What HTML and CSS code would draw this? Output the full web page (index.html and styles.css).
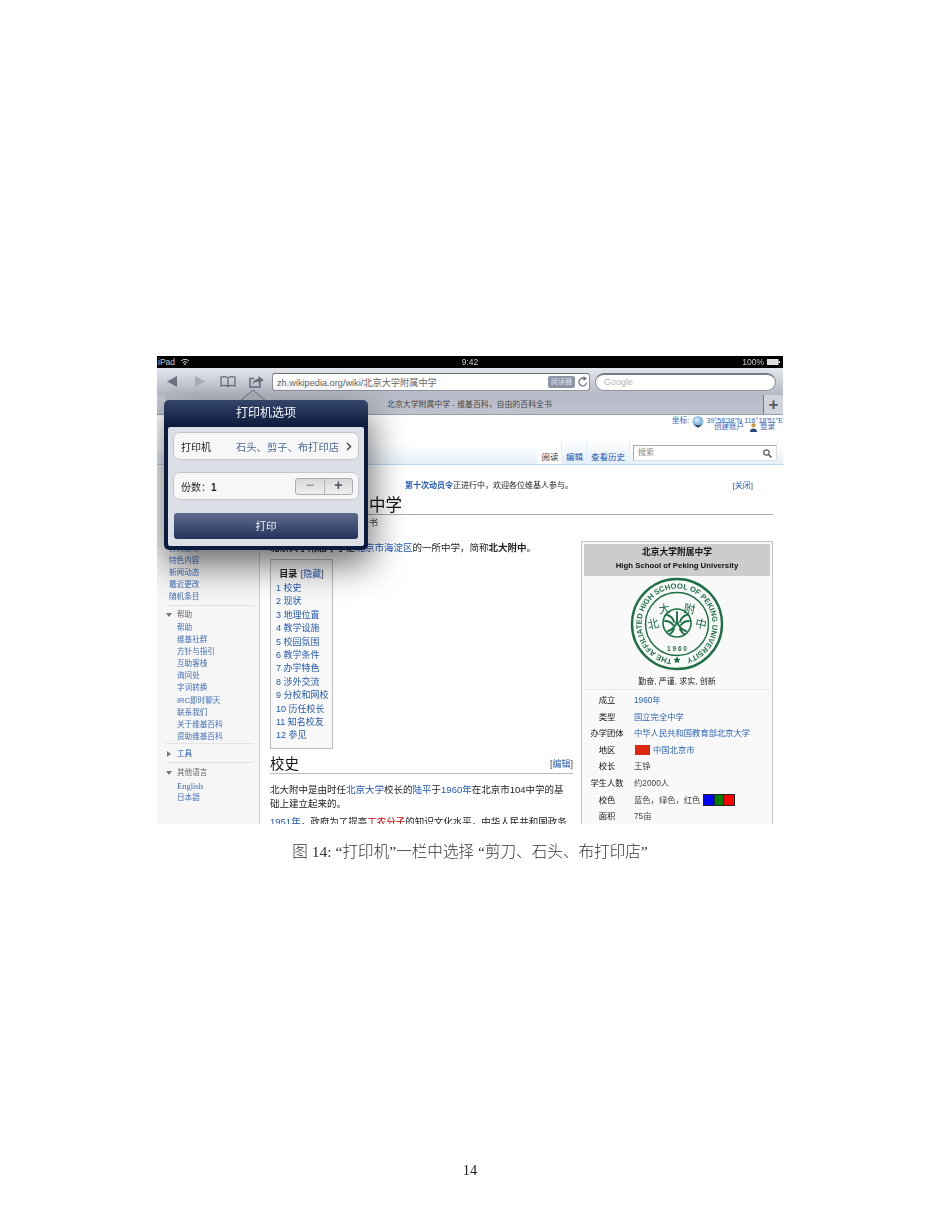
FILE: index.html
```html
<!DOCTYPE html>
<html lang="zh-CN">

<head>
    <meta charset="UTF-8">
    <title>图 14</title>
    <link rel="stylesheet" href="styles.css">
</head>

<body>
    <div class="page">
        <div class="ipad">
            <div class="status">
                <div class="status-left">
                    <span>iPad</span>
                    <svg class="wifi" viewBox="0 0 12 9"><path d="M1 3.500a7 7 0 0 1 10 0M3 5.500a4.200 4.200 0 0 1 6 0" fill="none" stroke="#ccc" stroke-width="1.200"/><path d="M6 8.500 4.400 6.800a2.300 2.300 0 0 1 3.200 0z" fill="#ccc"/></svg>
                </div>
                <span class="status-time">9:42</span>
                <div class="status-right">
                    <span>100%</span>
                    <svg class="battery" viewBox="0 0 13 6"><rect x=".5" y=".5" width="10.500" height="5" fill="#ddd" stroke="#ddd"/><rect x="11.500" y="2" width="1.500" height="2" fill="#ddd"/></svg>
                </div>
            </div>

            <div class="toolbar">
                <svg class="tool-back" viewBox="0 0 10 11"><path d="M0 5.500 10 0v11z" fill="#6b7280"/></svg>
                <svg class="tool-forward" viewBox="0 0 10 11"><path d="M10 5.500 0 0v11z" fill="#a9adba"/></svg>
                <svg class="tool-book" viewBox="0 0 16 11"><path d="M8 2C6.500.8 3 .6 1 1.200v8.600c2-.6 5.500-.4 7 .8 1.500-1.200 5-1.400 7-.8V1.200C13 .6 9.500.8 8 2zm0 0v8.600" fill="none" stroke="#666c7b" stroke-width="1.300"/></svg>
                <svg class="tool-share" viewBox="0 0 15 13"><path d="M5 3.500H1v8.500h10V8" fill="none" stroke="#666c7b" stroke-width="1.500"/><path d="M3.500 9.500c.3-3.500 3-5.500 6-5.500V1l5 4-5 4V6.500c-2.500 0-4.500 1-6 3z" fill="#666c7b"/></svg>
                <div class="url-field">
                    <span class="url-text">zh.wikipedia.org/wiki/北京大学附属中学</span>
                    <span class="reader">阅读器</span>
                    <svg class="reload" viewBox="0 0 10 11"><path d="M8.500 6.500A3.800 3.800 0 1 1 6.500 2.600" fill="none" stroke="#666c78" stroke-width="1.200"/><path d="M5.500 0 9 2.700 5.500 5z" fill="#666c78"/></svg>
                </div>
                <div class="search-field">Google</div>
            </div>

            <div class="tabbar">
                <div class="tab-stub"></div>
                <div class="tab-title">北京大学附属中学 - 维基百科，自由的百科全书</div>
                <div class="tab-plus">+</div>
            </div>

            <div class="wiki-head">
                <div class="user-links">
                    <div class="coords">
                        <span>坐标:</span>
                        <svg class="globe" viewBox="0 0 12 12"><circle cx="6" cy="5.500" r="5.500" fill="#8fc0e2"/><circle cx="5" cy="4" r="2.500" fill="#c9e2f3"/><path d="M1.500 8c2 1.500 7 1.500 9 0L6 12z" fill="#2f3d4d"/></svg>
                        <span class="coord-value">39°58'38"N 116°18'51"E</span>
                    </div>
                    <div class="login">
                        <span>创建账户</span>
                        <svg class="person" viewBox="0 0 8 10"><circle cx="4" cy="2.500" r="2.300" fill="#d9922f"/><path d="M0 10c0-5 8-5 8 0z" fill="#27477f"/></svg>
                        <span>登录</span>
                    </div>
                </div>
                <div class="tabs-row">
                    <span class="wtab wtab-active">阅读</span>
                    <span class="wtab">编辑</span>
                    <span class="wtab">查看历史</span>
                    <div class="wsearch">
                        <span>搜索</span>
                        <svg class="magnifier" viewBox="0 0 9 9"><circle cx="3.500" cy="3.500" r="2.700" fill="none" stroke="#555" stroke-width="1.200"/><path d="M5.500 5.500 8.500 8.500" stroke="#555" stroke-width="1.500"/></svg>
                    </div>
                </div>
            </div>

            <div class="wiki-body">
                <div class="sidebar">
                    <ul class="nav-list nav-first">
                        <li>分类索引</li>
                        <li>特色内容</li>
                        <li>新闻动态</li>
                        <li>最近更改</li>
                        <li>随机条目</li>
                    </ul>
                    <div class="nav-head"><i class="tri-down"></i>帮助</div>
                    <ul class="nav-list">
                        <li>帮助</li>
                        <li>维基社群</li>
                        <li>方针与指引</li>
                        <li>互助客栈</li>
                        <li>询问处</li>
                        <li>字词转换</li>
                        <li>IRC即时聊天</li>
                        <li>联系我们</li>
                        <li>关于维基百科</li>
                        <li>资助维基百科</li>
                    </ul>
                    <div class="nav-head nav-sep nav-tools"><i class="tri-right"></i><a>工具</a></div>
                    <div class="nav-head nav-sep"><i class="tri-down"></i>其他语言</div>
                    <ul class="nav-list">
                        <li class="serif">English</li>
                        <li>日本語</li>
                    </ul>
                </div>

                <div class="article">
                    <div class="notice">
                        <span><a>第十次动员令</a>正进行中，欢迎各位维基人参与。</span>
                        <a class="notice-close">[关闭]</a>
                    </div>
                    <h1 class="title">北京大学附属中学</h1>
                    <div class="subtitle">维基百科，自由的百科全书</div>
                    <div class="columns">
                        <div class="main-col">
                            <p class="intro"><b>北京大学附属中学</b>是<a>北京市海淀区</a>的一所中学，简称<b>北大附中</b>。</p>
                            <div class="toc">
                                <div class="toc-title"><b>目录</b> <span>[<a>隐藏</a>]</span></div>
                                <ol class="toc-list">
                                    <li>1 校史</li>
                                    <li>2 现状</li>
                                    <li>3 地理位置</li>
                                    <li>4 教学设施</li>
                                    <li>5 校园氛围</li>
                                    <li>6 教学条件</li>
                                    <li>7 办学特色</li>
                                    <li>8 涉外交流</li>
                                    <li>9 分校和网校</li>
                                    <li>10 历任校长</li>
                                    <li>11 知名校友</li>
                                    <li>12 参见</li>
                                </ol>
                            </div>
                            <h2 class="section"><span>校史</span><span class="edit">[<a>编辑</a>]</span></h2>
                            <p class="para">北大附中是由时任<a>北京大学</a>校长的<a>陆平</a>于<a>1960年</a>在北京市104中学的基<br>础上建立起来的。</p>
                            <p class="para"><a>1951年</a>，政府为了提高<em>工农分子</em>的知识文化水平，中华人民共和国政务</p>
                        </div>

                        <div class="infobox">
                            <div class="info-head">
                                <div class="info-name">北京大学附属中学</div>
                                <div class="info-sub">High School of Peking University</div>
                            </div>
                            <svg class="logo" viewBox="0 0 94 94">
                                <defs>
                                    <path id="logoArc" d="M42 82.200A35.500 35.500 0 1 1 52 82.200"/>
                                </defs>
                                <g fill="none" stroke="#1d6f45">
                                    <circle cx="47" cy="47" r="45" stroke-width="2.400"/>
                                    <circle cx="47" cy="47" r="31.500" stroke-width="1.500"/>
                                    <circle cx="47" cy="46" r="14" stroke-width="1.600"/>
                                </g>
                                <text class="logo-ring"><textPath href="#logoArc" textLength="208" lengthAdjust="spacing">THE AFFILIATED HIGH SCHOOL OF PEKING UNIVERSITY</textPath></text>
                                <path d="M47 79.500l1.200 2.300 2.300.3-1.700 1.700.4 2.300-2.200-1.100-2.200 1.100.4-2.300-1.700-1.700 2.300-.3z" fill="#1d6f45"/>
                                <g fill="none" stroke="#1d6f45" stroke-width="1.900" stroke-linecap="round">
                                    <path d="M47 35v10"/>
                                    <path d="M37 38c4 1 6 3 7 7M57 38c-4 1-6 3-7 7"/>
                                    <path d="M35 44c3 0 6 1 8 4M59 44c-3 0-6 1-8 4"/>
                                    <path d="M47 44c-1 5-5 9-9 10M47 44c1 5 5 9 9 10"/>
                                    <path d="M44 52c-1 2-2 4-4 5M50 52c1 2 2 4 4 5"/>
                                </g>
                                <text class="logo-char" x="24" y="51" transform="rotate(-12 24 51)">北</text>
                                <text class="logo-char" x="35" y="36" transform="rotate(-8 35 36)">大</text>
                                <text class="logo-char" x="59" y="36" transform="rotate(8 59 36)">附</text>
                                <text class="logo-char" x="70" y="51" transform="rotate(12 70 51)">中</text>
                                <text class="logo-year" x="47" y="73.500">1 9 6 0</text>
                            </svg>
                            <div class="motto">勤奋, 严谨, 求实, 创新</div>
                            <dl class="facts">
                                <div><dt>成立</dt><dd><a>1960年</a></dd></div>
                                <div><dt>类型</dt><dd><a>国立完全中学</a></dd></div>
                                <div><dt>办学团体</dt><dd><a>中华人民共和国教育部北京大学</a></dd></div>
                                <div><dt>地区</dt><dd><i class="flag"></i><a>中国北京市</a></dd></div>
                                <div><dt>校长</dt><dd>王铮</dd></div>
                                <div><dt>学生人数</dt><dd>约2000人</dd></div>
                                <div><dt>校色</dt><dd>蓝色，绿色，红色<span class="swatches"><i class="sw-blue"></i><i class="sw-green"></i><i class="sw-red"></i></span></dd></div>
                                <div><dt>面积</dt><dd>75亩</dd></div>
                            </dl>
                        </div>
                    </div>
                </div>
            </div>

            <!-- popover sits over the page -->
            <svg class="pop-arrow" viewBox="0 0 26 12"><path d="M0 12 13 1l13 11" fill="#b4b8c5" stroke="#5a6070" stroke-width=".8"/></svg>
            <div class="popover">
                <div class="pop-title">打印机选项</div>
                <div class="pop-panel">
                    <div class="pop-row">
                        <span>打印机</span>
                        <span class="pop-value">石头、剪子、布打印店</span>
                        <svg class="chevron" viewBox="0 0 6 9"><path d="M1 1l3.500 3.500L1 8" fill="none" stroke="#555" stroke-width="1.600"/></svg>
                    </div>
                    <div class="pop-row pop-row-copies">
                        <span>份数：<b>1</b></span>
                        <div class="stepper">
                            <span class="step-minus">−</span>
                            <span class="step-plus">+</span>
                        </div>
                    </div>
                    <div class="pop-print">打印</div>
                </div>
            </div>
        </div>

        <div class="caption">图 14: “打印机”一栏中选择 “剪刀、石头、布打印店”</div>
        <div class="page-num">14</div>
    </div>
</body>

</html>
```

FILE: styles.css
```css
* {
    box-sizing: border-box;
}

body {
    margin: 0;
    background: #fff;
    font-family: "Liberation Sans", "Noto Sans CJK SC", sans-serif;
    color: #222;
}

a {
    color: #2259b5;
}

ul,
ol,
dl,
dd,
p,
h1,
h2 {
    margin: 0;
    padding: 0;
    list-style: none;
    font-weight: normal;
}

.page {
    height: 1216px;
    padding-top: 356px;
    display: flex;
    flex-direction: column;
    align-items: center;
    overflow: hidden;
}

.ipad {
    position: relative;
    width: 626px;
    height: 468px;
    flex: none;
    overflow: hidden;
    font-size: 9px;
    filter: blur(0.3px);
}

/* status bar */
.status {
    height: 12px;
    background: #000;
    color: #ccc;
    font-size: 8.500px;
    line-height: 12px;
    display: flex;
    justify-content: space-between;
    padding: 0 3px 0 1px;
    position: relative;
}

.status-left,
.status-right {
    display: flex;
    align-items: center;
    gap: 5px;
}

.status-right {
    gap: 3px;
}

.status-time {
    position: absolute;
    left: 0;
    right: 0;
    text-align: center;
}

.wifi {
    width: 10px;
    height: 8px;
}

.battery {
    width: 13px;
    height: 6px;
}

/* toolbar */
.toolbar {
    height: 27px;
    background: linear-gradient(#e4e6ec, #b5b9c5);
    display: flex;
    align-items: center;
    padding-left: 10px;
}

.tool-back,
.tool-forward {
    width: 10px;
    height: 11px;
}

.tool-forward {
    margin-left: 18px;
}

.tool-book {
    width: 16px;
    height: 11px;
    margin-left: 15px;
}

.tool-share {
    width: 15px;
    height: 13px;
    margin-left: 13px;
}

.url-field {
    width: 318px;
    height: 18px;
    margin-left: 8px;
    background: #fff;
    border: 1px solid #8d919c;
    border-top-color: #6f737d;
    border-radius: 3px;
    display: flex;
    align-items: center;
    padding: 0 1px 0 4px;
    color: #666;
    font-size: 9.200px;
}

.url-text {
    flex: 1;
}

.reader {
    width: 27px;
    height: 12px;
    background: #8c95a5;
    color: #dfe3ea;
    border-radius: 2px;
    font-size: 7px;
    line-height: 12px;
    text-align: center;
}

.reload {
    width: 10px;
    height: 11px;
    margin-left: 3px;
}

.search-field {
    width: 181px;
    height: 18px;
    margin-left: 5px;
    background: #fff;
    border: 1px solid #8d919c;
    border-top: 2px solid #777b86;
    border-radius: 9px;
    color: #b0b0b0;
    font-size: 9px;
    line-height: 15px;
    padding-left: 8px;
}

/* tab strip */
.tabbar {
    height: 20px;
    background: linear-gradient(#b9bcc8, #c0c3ce);
    border-bottom: 1px solid #9a9da8;
    display: flex;
    align-items: stretch;
    position: relative;
}

.tab-stub {
    width: 8px;
    background: #c4c7d1;
}

.tab-title {
    position: absolute;
    left: 230px;
    top: 0;
    line-height: 20px;
    font-size: 7.900px;
    color: #444;
}

.tab-plus {
    margin-left: auto;
    width: 20px;
    background: #d0d3db;
    border-left: 1px solid #777;
    color: #555;
    font-size: 17px;
    font-weight: bold;
    line-height: 19px;
    text-align: center;
}

/* wiki header */
.wiki-head {
    height: 50px;
    background: linear-gradient(#fff 60%, #e6f0f9);
    border-bottom: 1px solid #bcd6ee;
    position: relative;
    display: flex;
    flex-direction: column;
    align-items: flex-end;
}

.user-links {
    height: 22px;
    color: #3366bb;
    font-size: 7.800px;
    line-height: 8px;
}

.coords {
    display: flex;
    align-items: center;
    justify-content: flex-end;
    margin-top: 1px;
    height: 9px;
    white-space: nowrap;
}

.coord-value {
    font-size: 7.150px;
}

.globe {
    width: 12px;
    height: 12px;
    margin: 2px 2px 0 3px;
    flex: none;
}

.login {
    display: flex;
    align-items: center;
    justify-content: flex-end;
    height: 8px;
    margin-top: -2px;
    padding-right: 8px;
    font-size: 7.500px;
}

.person {
    width: 7px;
    height: 9px;
    margin: 0 3px 0 6px;
}

.tabs-row {
    display: flex;
    align-items: flex-end;
    padding-right: 6px;
    height: 28px;
}

.wtab {
    height: 24px;
    padding: 10px 3.500px 0;
    font-size: 8.500px;
    line-height: 14px;
    color: #2259b5;
    background: linear-gradient(#fff, #e2eef8);
    border-right: 1px solid #e4eef7;
}

.wtab-active {
    color: #333;
    background: #fff;
    padding: 10px 3px 0 4px;
}

.wsearch {
    width: 144px;
    height: 16px;
    margin: 0 0 3px 3.500px;
    background: #fff;
    border: 1px solid #aaa;
    border-right-color: #ddd;
    border-bottom-color: #ddd;
    font-size: 8px;
    line-height: 14px;
    color: #888;
    padding: 0 4px;
    display: flex;
    justify-content: space-between;
    align-items: center;
}

.magnifier {
    width: 9px;
    height: 9px;
}

/* sidebar + article */
.wiki-body {
    height: 360px;
    display: flex;
    background: #f6f6f6;
}

.sidebar {
    width: 103px;
    flex: none;
    padding-top: 78px;
    font-size: 7.600px;
    line-height: 12.100px;
    color: #3f6cb8;
    border-right: 1px solid #a7d7f9;
}

.nav-list {
    padding-left: 12px;
}

.nav-first {
    margin-bottom: 1.500px;
}

.nav-head {
    display: flex;
    align-items: center;
    height: 17px;
    margin-left: 9px;
    margin-right: 5px;
    padding-top: 3px;
    color: #666;
    border-top: 1px solid #e4e4e4;
}

.nav-head + .nav-list {
    padding-left: 20px;
}

.nav-sep {
    margin-top: 1px;
    height: 18px;
}

.nav-tools {
    margin-top: 0;
    height: 18px;
}

.nav-tools a {
    color: #2259b5;
}

.tri-down {
    width: 0;
    height: 0;
    margin-right: 5px;
    border: 3px solid transparent;
    border-top: 4px solid #777;
    border-bottom: 0;
}

.tri-right {
    width: 0;
    height: 0;
    margin-right: 6px;
    margin-left: 1px;
    border: 3px solid transparent;
    border-left: 4px solid #777;
    border-right: 0;
}

.serif {
    font-family: "Liberation Serif", serif;
    font-size: 8.500px;
}

.article {
    flex: 1;
    background: #fff;
    padding: 14px 10px 0 10px;
    font-size: 9.500px;
    line-height: 14px;
    overflow: hidden;
}

.notice {
    display: flex;
    justify-content: space-between;
    padding: 0 20px 0 135px;
    height: 14px;
    font-size: 8px;
}

.notice a {
    font-weight: bold;
}

.notice .notice-close {
    font-weight: normal;
}

.title {
    font-size: 16.500px;
    line-height: 22px;
    margin-top: 1px;
    height: 21px;
    color: #111;
    border-bottom: 1px solid #aaa;
}

.subtitle {
    height: 17px;
    line-height: 17px;
    color: #444;
    font-size: 9px;
}

.columns {
    display: flex;
    margin-top: 9px;
}

.main-col {
    width: 303px;
    flex: none;
}

.intro b {
    font-weight: bold;
}

.toc {
    width: 63px;
    height: 190px;
    margin-top: 4px;
    background: #f9f9f9;
    border: 1px solid #bbb;
    padding: 7px 0 0 5px;
    font-size: 9px;
}

.toc-title {
    text-align: center;
    line-height: 14px;
    margin-bottom: 1px;
    white-space: nowrap;
    padding-right: 5px;
}

.toc-title b {
    font-weight: bold;
    margin-right: 1px;
}

.toc-title span {
    color: #444;
}

.toc-list {
    color: #2259b5;
    line-height: 13.400px;
    white-space: nowrap;
}

.section {
    display: flex;
    justify-content: space-between;
    align-items: flex-end;
    height: 25px;
    border-bottom: 1px solid #bbb;
    font-size: 14.500px;
    line-height: 18px;
    color: #111;
}

.edit {
    font-size: 9px;
    line-height: 18px;
    color: #444;
}

.para {
    margin-top: 9px;
    color: #222;
    white-space: nowrap;
}

.para + .para {
    margin-top: 4px;
}

.para em {
    font-style: normal;
    color: #cc0000;
}

/* infobox */
.infobox {
    width: 192px;
    height: 340px;
    flex: none;
    margin-left: 8px;
    background: #f9f9f9;
    border: 1px solid #c4c4c4;
    padding: 2px;
}

.info-head {
    height: 32px;
    background: #ccc;
    text-align: center;
    font-weight: bold;
    line-height: 14px;
    padding-top: 1px;
    color: #111;
}

.info-name {
    font-size: 8.750px;
}

.info-sub {
    font-size: 7.800px;
}

.logo {
    display: block;
    width: 94px;
    height: 94px;
    margin: 1px auto 0;
}

.logo-ring {
    font-family: "Liberation Sans", sans-serif;
    font-size: 7.600px;
    font-weight: bold;
    fill: #1d6f45;
}

.logo-char {
    font-size: 11.500px;
    fill: #1d6f45;
    text-anchor: middle;
}

.logo-year {
    font-size: 6.500px;
    font-weight: bold;
    fill: #1d6f45;
    text-anchor: middle;
}

.motto {
    text-align: center;
    font-size: 8px;
    line-height: 14px;
    margin-top: 4px;
    height: 15px;
    border-bottom: 1px solid #e6e6e6;
}

.facts {
    font-size: 8.300px;
    line-height: 16.600px;
    margin-top: 2px;
}

.facts > div {
    display: flex;
    height: 16.600px;
}

.facts dt {
    width: 46px;
    text-align: center;
    flex: none;
    color: #111;
}

.facts dd {
    margin-left: 4px;
    display: flex;
    align-items: center;
    white-space: nowrap;
    color: #444;
}

.facts a {
    color: #2a62b8;
}

.flag {
    width: 15px;
    height: 10px;
    margin: 0 3px 0 1px;
    background: #de2910;
}

.swatches {
    display: flex;
    margin-left: 3px;
    height: 12px;
    border: 1px solid #222;
}

.swatches i {
    width: 10px;
}

.sw-blue {
    background: #0000ff;
}

.sw-green {
    background: #008000;
    border-left: 1px solid #222;
    border-right: 1px solid #222;
}

.sw-red {
    background: #ff0000;
}

/* popover */
.pop-arrow {
    position: absolute;
    left: 83px;
    top: 33px;
    width: 26px;
    height: 12px;
}

.popover {
    position: absolute;
    left: 7px;
    top: 44px;
    width: 204px;
    height: 150px;
    background: linear-gradient(#35466b, #0c1c3e 26px, #0c1c3e);
    border-radius: 5px;
    padding: 0 4px 4px;
    box-shadow: 2px 14px 36px rgba(0, 0, 0, 0.6);
}

.pop-title {
    height: 27px;
    line-height: 26px;
    text-align: center;
    color: #f2f4f8;
    font-size: 12px;
}

.pop-panel {
    height: 119px;
    background: #dcdfe5;
    border-radius: 2px;
    padding: 5px 5px 0;
    font-size: 10px;
    color: #222;
}

.pop-row {
    height: 28px;
    background: #f7f7f7;
    border: 1px solid #c4c6cc;
    border-radius: 7px;
    display: flex;
    align-items: center;
    padding: 0 6px 0 7px;
    white-space: nowrap;
}

.pop-value {
    margin-left: auto;
    color: #4c6a99;
    font-size: 10.300px;
}

.chevron {
    width: 6px;
    height: 9px;
    margin-left: 7px;
}

.pop-row-copies {
    margin-top: 12px;
    padding-right: 5px;
    justify-content: space-between;
}

.pop-row-copies b {
    font-weight: bold;
}

.stepper {
    width: 58px;
    height: 17px;
    display: flex;
    border: 1px solid #a9acb4;
    border-radius: 3px;
    background: linear-gradient(#d8d8da, #eeeeef);
    font-weight: bold;
    font-size: 14px;
    line-height: 13px;
    text-align: center;
}

.stepper span {
    flex: 1;
}

.step-minus {
    color: #9a9a9e;
    border-right: 1px solid #b5b7bd;
}

.step-plus {
    color: #555a63;
}

.pop-print {
    height: 26px;
    margin: 13px 1px 0;
    border-radius: 3px;
    background: linear-gradient(#5d6c8d, #24335a);
    color: #eef0f5;
    text-align: center;
    line-height: 26px;
    font-size: 10.500px;
}

/* page text under the screenshot */
.caption {
    margin-top: 19px;
    font-family: "Liberation Serif", "Noto Sans CJK SC", serif;
    font-size: 15.600px;
    font-weight: 300;
    line-height: 18px;
    color: #333;
    filter: blur(0.2px);
}

.page-num {
    margin-top: 300px;
    font-family: "Liberation Serif", serif;
    font-size: 14.400px;
    line-height: 18px;
    color: #222;
    filter: blur(0.2px);
}
```
